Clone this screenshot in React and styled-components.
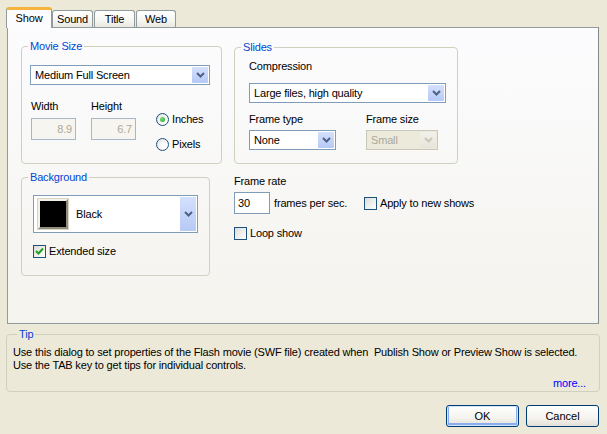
import React from 'react';
import styled, { createGlobalStyle, css } from 'styled-components';

const GlobalStyle = createGlobalStyle`
    html, body {
        margin: 0;
        padding: 0;
        background: #ece9d8;
    }
    * {
        box-sizing: border-box;
    }
    body {
        font-family: 'Liberation Sans', Arial, sans-serif;
        font-size: 11px;
        letter-spacing: -0.17px;
        line-height: 13px;
        color: #000;
    }
`;

const Dialog = styled.div`
    width: 607px;
    height: 434px;
    padding: 7px 8px 0 7px;
    background: #ece9d8;
    display: flex;
    flex-direction: column;
`;

const TabStrip = styled.div`
    display: flex;
    align-items: flex-end;
    height: 20px;
    margin-left: -1px;
    position: relative;
    z-index: 1;
`;

const Tab = styled.div`
    height: 17px;
    padding: 1px 6px 0;
    margin-right: 1px;
    border: 1px solid #919b9c;
    border-bottom: none;
    border-radius: 3px 3px 0 0;
    background: linear-gradient(#ffffff, #f3f3ef 70%, #e9e8e1);
    display: flex;
    align-items: center;
    justify-content: center;
    width: ${props => props.width}px;
    ${props =>
        props.active &&
        css`
            height: 21px;
            margin-bottom: -1px;
            margin-right: 0;
            background: #fcfcfe;
            border-top: 3px solid #f6b43c;
            border-radius: 3px 3px 0 0;
            padding-bottom: 2px;
        `}
`;

const Panel = styled.div`
    height: 297px;
    border: 1px solid #919b9c;
    border-right-color: #7f8a8b;
    background: linear-gradient(#fcfcfe, #f4f3ee);
    display: flex;
    gap: 12px;
    padding: 12px 0 0 13px;
`;

const Column = styled.div`
    display: flex;
    flex-direction: column;
    flex-shrink: 0;
    width: ${props => props.width}px;
`;

const Group = styled.fieldset`
    margin: 0;
    padding: 0;
    min-width: 0;
    border: 1px solid #d0d0bf;
    border-radius: 4px;
    width: ${props => props.width}px;
    height: ${props => props.height}px;
    display: flex;
    flex-direction: column;
    align-items: flex-start;
`;

const GroupTitle = styled.legend`
    margin-left: ${props => props.inset ?? 6}px;
    padding: 0 2px;
    color: #0046d5;
    line-height: 13px;
`;

const Label = styled.div`
    line-height: 13px;
    white-space: nowrap;
`;

const ComboBox = styled.div`
    flex-shrink: 0;
    height: ${props => props.height || 20}px;
    width: ${props => props.width}px;
    border: 1px solid ${props => (props.disabled ? '#c9c7ba' : '#7f9db9')};
    background: ${props => (props.disabled ? '#ebeadb' : '#fff')};
    color: ${props => (props.disabled ? '#aca899' : '#000')};
    display: flex;
    align-items: center;
    padding: 1px;
`;

const ComboText = styled.span`
    flex: 1;
    padding-left: 3px;
    white-space: nowrap;
    overflow: hidden;
`;

const ArrowButton = styled.span`
    width: 16px;
    flex-shrink: 0;
    align-self: stretch;
    border-radius: 1px;
    display: flex;
    align-items: center;
    justify-content: center;
    background: ${props =>
        props.disabled ? 'linear-gradient(#f2f1ea, #e6e4da)' : 'linear-gradient(#d4e0fc, #b6c9f6)'};
    svg {
        display: block;
    }
`;

const Chevron = ({ disabled }) => (
    <svg width="9" height="6" viewBox="0 0 9 6">
        <polyline
            points="1,1 4.5,4.5 8,1"
            fill="none"
            stroke={disabled ? '#c9c7ba' : '#4d6185'}
            strokeWidth="2"
        />
    </svg>
);

const Combo = ({ width, height, disabled, children }) => (
    <ComboBox width={width} height={height} disabled={disabled}>
        <ComboText>{children}</ComboText>
        <ArrowButton disabled={disabled}>
            <Chevron disabled={disabled} />
        </ArrowButton>
    </ComboBox>
);

const EditBox = styled.div`
    flex-shrink: 0;
    width: ${props => props.width}px;
    height: 22px;
    border: 1px solid ${props => (props.disabled ? '#a7b7c9' : '#7f9db9')};
    background: ${props => (props.disabled ? '#f6f5f0' : '#fff')};
    color: ${props => (props.disabled ? '#aca899' : '#000')};
    display: flex;
    align-items: center;
    justify-content: ${props => (props.disabled ? 'flex-end' : 'flex-start')};
    padding: 0 3px;
`;

const Spaced = styled.div`
    margin-top: ${props => props.top || 0}px;
    margin-left: ${props => props.left || 0}px;
`;

const SizeRow = styled.div`
    display: flex;
    margin: 15px 0 0 9px;
`;

const Field = styled.div`
    display: flex;
    flex-direction: column;
    gap: 5px;
    margin-right: ${props => props.gap}px;
`;

const RadioStack = styled.div`
    display: flex;
    flex-direction: column;
    gap: 12px;
    margin-top: 13px;
`;

const OptionRow = styled.div`
    display: flex;
    align-items: center;
    gap: 3px;
    height: 13px;
    white-space: nowrap;
    flex-shrink: 0;
`;

const RadioDot = styled.span`
    width: 13px;
    height: 13px;
    border-radius: 50%;
    border: 1px solid #1c5180;
    background: radial-gradient(circle at 65% 65%, #ffffff 20%, #dcdcd7 100%);
    display: flex;
    align-items: center;
    justify-content: center;
    &::after {
        content: '';
        display: ${props => (props.checked ? 'block' : 'none')};
        width: 5px;
        height: 5px;
        border-radius: 50%;
        background: radial-gradient(circle at 35% 35%, #7be07a, #21a121);
    }
`;

const Radio = ({ checked, children }) => (
    <OptionRow>
        <RadioDot checked={checked} />
        {children}
    </OptionRow>
);

const CheckSquare = styled.span`
    width: 13px;
    height: 13px;
    border: 1px solid #1c5180;
    background: linear-gradient(135deg, #dcdcd7, #ffffff);
    display: flex;
    align-items: center;
    justify-content: center;
`;

const Check = ({ checked, children }) => (
    <OptionRow>
        <CheckSquare>
            {checked && (
                <svg width="9" height="9" viewBox="0 0 9 9">
                    <polyline points="1,4 3.5,6.5 8,1.5" fill="none" stroke="#21a121" strokeWidth="2" />
                </svg>
            )}
        </CheckSquare>
        {children}
    </OptionRow>
);

const Swatch = styled.span`
    width: 30px;
    height: 30px;
    flex-shrink: 0;
    margin: 0 5px 0 3px;
    background: #000;
    border: 2px solid;
    border-color: #f3f1e6 #8f8c7c #8f8c7c #f3f1e6;
    box-shadow: 0 0 0 1px #d8d5c6;
`;

const FrameRow = styled.div`
    display: flex;
    gap: 30px;
    margin: 10px 0 0 14px;
`;

const RateRow = styled.div`
    display: flex;
    align-items: center;
    margin-top: 4px;
`;

const RateUnit = styled.span`
    flex-shrink: 0;
    width: 94px;
    padding-left: 4px;
    white-space: nowrap;
`;

const TipGroup = styled(Group)`
    margin: 4px 0 0 -1px;
    padding: 5px 13px 0 6px;
`;

const TipText = styled.p`
    margin: 0;
    line-height: 13px;
    white-space: nowrap;
`;

const More = styled.a`
    align-self: flex-end;
    margin-top: 5px;
    color: #0000ff;
    text-decoration: none;
`;

const ButtonBar = styled.div`
    display: flex;
    justify-content: flex-end;
    gap: 7px;
    margin-top: 13px;
`;

const Button = styled.button`
    width: 73px;
    height: 22px;
    font: inherit;
    color: #000;
    border: 1px solid #003c74;
    border-radius: 3px;
    background: linear-gradient(#ffffff, #f4f3ee 60%, #e3e0d6);
    padding: 0;
    ${props =>
        props.primary &&
        css`
            box-shadow: inset 0 0 0 1px #cee7ff, inset 0 -1px 0 2px #89adf0;
        `}
`;

export default function App() {
    return (
        <>
            <GlobalStyle />
            <Dialog>
                <TabStrip>
                    <Tab active width={46}>Show</Tab>
                    <Tab width={41}>Sound</Tab>
                    <Tab width={41}>Title</Tab>
                    <Tab width={40}>Web</Tab>
                </TabStrip>
                <Panel>
                    <Column width={201}>
                        <Group width={201} height={124}>
                            <GroupTitle>Movie Size</GroupTitle>
                            <Spaced top={12} left={8}>
                                <Combo width={180}>Medium Full Screen</Combo>
                            </Spaced>
                            <SizeRow>
                                <Field gap={15}>
                                    <Label>Width</Label>
                                    <EditBox width={45} disabled>8.9</EditBox>
                                </Field>
                                <Field gap={20}>
                                    <Label>Height</Label>
                                    <EditBox width={45} disabled>6.7</EditBox>
                                </Field>
                                <RadioStack>
                                    <Radio checked>Inches</Radio>
                                    <Radio>Pixels</Radio>
                                </RadioStack>
                            </SizeRow>
                        </Group>
                        <Spaced top={7}>
                            <Group width={189} height={105}>
                                <GroupTitle>Background</GroupTitle>
                                <Spaced top={11} left={11}>
                                    <ComboBox width={165} height={38}>
                                        <Swatch />
                                        <ComboText>Black</ComboText>
                                        <ArrowButton>
                                            <Chevron />
                                        </ArrowButton>
                                    </ComboBox>
                                </Spaced>
                                <Spaced top={12} left={11}>
                                    <Check checked>Extended size</Check>
                                </Spaced>
                            </Group>
                        </Spaced>
                    </Column>
                    <Column width={224}>
                        <Spaced top={1}>
                            <Group width={224} height={123}>
                                <GroupTitle>Slides</GroupTitle>
                                <Spaced top={6} left={14}>
                                    <Label>Compression</Label>
                                    <Spaced top={10}>
                                        <Combo width={197}>Large files, high quality</Combo>
                                    </Spaced>
                                </Spaced>
                                <FrameRow>
                                    <Field gap={0}>
                                        <Label>Frame type</Label>
                                        <Spaced top={-1}>
                                            <Combo width={87}>None</Combo>
                                        </Spaced>
                                    </Field>
                                    <Field gap={0}>
                                        <Label>Frame size</Label>
                                        <Spaced top={-1}>
                                            <Combo width={72} disabled>
                                                Small
                                            </Combo>
                                        </Spaced>
                                    </Field>
                                </FrameRow>
                            </Group>
                        </Spaced>
                        <Spaced top={11}>
                            <Label>Frame rate</Label>
                            <RateRow>
                                <EditBox width={36}>30</EditBox>
                                <RateUnit>frames per sec.</RateUnit>
                                <Check>Apply to new shows</Check>
                            </RateRow>
                            <Spaced top={13}>
                                <Check>Loop show</Check>
                            </Spaced>
                        </Spaced>
                    </Column>
                </Panel>
                <TipGroup width={594} height={64}>
                    <GroupTitle inset={4}>Tip</GroupTitle>
                    <TipText>
                        Use this dialog to set properties of the Flash movie (SWF file) created when&nbsp; Publish
                        Show or Preview Show is selected.
                    </TipText>
                    <TipText>Use the TAB key to get tips for individual controls.</TipText>
                    <More href="#">more...</More>
                </TipGroup>
                <ButtonBar>
                    <Button primary>OK</Button>
                    <Button>Cancel</Button>
                </ButtonBar>
            </Dialog>
        </>
    );
}
